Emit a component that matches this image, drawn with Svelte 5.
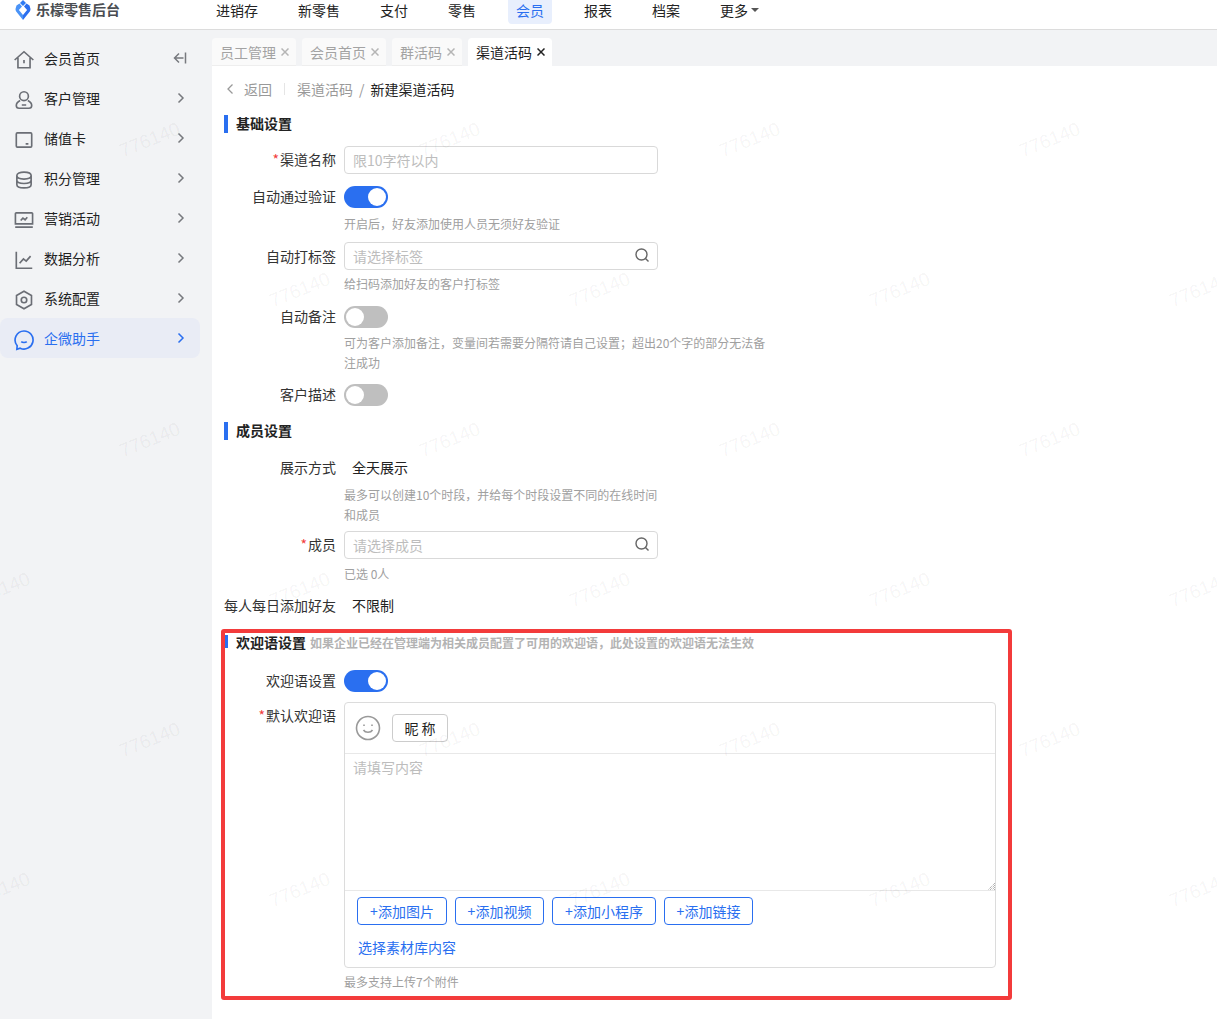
<script>
  const NAV = ["进销存", "新零售", "支付", "零售", "会员", "报表", "档案", "更多"];
  const TABS = ["员工管理", "会员首页", "群活码", "渠道活码"];
  const MENU = [
    { name: "会员首页", icon: "home" },
    { name: "客户管理", icon: "user" },
    { name: "储值卡", icon: "card" },
    { name: "积分管理", icon: "db" },
    { name: "营销活动", icon: "screen" },
    { name: "数据分析", icon: "chart" },
    { name: "系统配置", icon: "gear" },
    { name: "企微助手", icon: "chat" }
  ];
  const ICONS = {
    home: "M1.500 10 10 2.500l8.500 7.500M4.500 8v9h11V8M10 10v3",
    user: "M10 2.500a4 4 0 1 1 0 8 4 4 0 0 1 0-8ZM6.500 10.500C4.500 11.500 3 13 3 15c0 1.500 1 2.500 2.500 2.500h9c1.500 0 2.500-1 2.500-2.500 0-2-1.500-3.500-3.500-4.500M8 14.500h4",
    card: "M4 3.500h12a1 1 0 0 1 1 1v11a1 1 0 0 1-1 1H4a1 1 0 0 1-1-1v-11a1 1 0 0 1 1-1ZM11.500 13.500h2.500",
    db: "M3.500 6c0-1.900 2.900-3.200 6.500-3.200s6.500 1.300 6.500 3.200-2.900 3.200-6.500 3.200S3.500 7.900 3.500 6ZM3.500 6v8c0 1.900 2.900 3.200 6.500 3.200s6.500-1.300 6.500-3.200V6M3.500 10c0 1.900 2.900 3.200 6.500 3.200s6.500-1.300 6.500-3.200",
    screen: "M3 3.500h14a.8.8 0 0 1 .8.8v9.200H2.200V4.300a.8.8 0 0 1 .8-.8ZM2 16.500h16M7 10.500l2-2.200 2 1.500 2-2.300",
    chart: "M3 2.500v15h14.500M6 13l3.500-4 2.500 2 4-4.500",
    gear: "M10 2l6.800 3.900v8.200L10 18l-6.800-3.900V5.900ZM10 7.500a2.500 2.500 0 1 1 0 5 2.500 2.500 0 0 1 0-5Z",
    chat: "M10 1.800a8.200 8.200 0 1 1-3.500 15.600L3.500 18.500l.3-3.300A8.200 8.200 0 0 1 10 1.800ZM7.500 11.500c1 1 4 1 5 0"
  };
  const ROWS = [
    { y: 140, xs: [150, 450, 750, 1050] },
    { y: 290, xs: [300, 600, 900, 1200] },
    { y: 440, xs: [150, 450, 750, 1050] },
    { y: 590, xs: [0, 300, 600, 900, 1200] },
    { y: 740, xs: [150, 450, 750, 1050] },
    { y: 890, xs: [0, 300, 600, 900, 1200] }
  ];
  const MARKS = ROWS.flatMap(r => r.xs.map(x => ({ x, y: r.y })));
</script>

<div class="page">
  <header class="top">
    <div class="logo">
      <svg width="16" height="20" viewBox="0 0 16 20">
        <path d="M8 0 11 3 8 6 5 3Z" fill="#2f7bf3" />
        <path d="M4.500 3.500 7 6.500 3.900 10 8 15v5L1.200 11.500Q.2 10 .6 8.500L1.500 5.500Z" fill="#4a93f7" />
        <path d="M11.500 3.500 9 6.500 12.100 10 8 15v5l6.800-8.500q1-1.500.6-3L14.500 5.500Z" fill="#2b6ff0" />
      </svg>
      <span>乐檬零售后台</span>
    </div>
    <nav>
      {#each NAV as item}
        <span class="nav-item" class:active={item === "会员"}>
          {item}{#if item === "更多"}<i class="caret"></i>{/if}
        </span>
      {/each}
    </nav>
  </header>

  <div class="body">
    <aside>
      {#each MENU as m, i}
        <div class="menu-item" class:active={m.name === "企微助手"}>
          <svg class="menu-icon" width="22" height="22" viewBox="0 0 20 20" fill="none" stroke="currentColor" stroke-width="1.500">
            <path d={ICONS[m.icon]} />
          </svg>
          <span class="menu-name">{m.name}</span>
          {#if i === 0}
            <svg class="arrow" width="16" height="14" viewBox="0 0 16 14" fill="none" stroke="#77797e" stroke-width="1.500">
              <path d="M6 2.500 1.500 7 6 11.500M1.500 7h9M12.500 1.500v11" />
            </svg>
          {:else}
            <svg class="arrow" width="16" height="14" viewBox="0 0 16 14" fill="none" stroke="currentColor" stroke-width="1.500">
              <path d="M5.500 2.500 10 7l-4.500 4.500" />
            </svg>
          {/if}
        </div>
      {/each}
    </aside>

    <main>
      <div class="tabs">
        {#each TABS as tab}
          <div class="tab" class:current={tab === "渠道活码"}>
            {tab}
            <svg class="close" width="8" height="8" viewBox="0 0 8 8" fill="none" stroke="currentColor" stroke-width="1.500"><path d="m.5.5 7 7M7.500.5l-7 7" /></svg>
          </div>
        {/each}
      </div>

      <div class="content">
        <div class="crumbs">
          <svg width="8" height="12" viewBox="0 0 8 12" fill="none" stroke="#999" stroke-width="1.300"><path d="M6.500 1.500 2 6l4.500 4.500" /></svg>
          <span class="back">返回</span>
          <i class="sep"></i>
          <span class="crumb">渠道活码</span>
          <span class="slash">/</span>
          <span class="here">新建渠道活码</span>
        </div>

        <h3 class="title first">基础设置</h3>

        <div class="row r-name">
          <label><em>*</em>渠道名称</label>
          <div class="input">限10字符以内</div>
        </div>
        <div class="row r-switch">
          <label>自动通过验证</label>
          <span class="switch on"></span>
        </div>
        <p class="hint">开启后，好友添加使用人员无须好友验证</p>
        <div class="row r-input">
          <label>自动打标签</label>
          <div class="input">请选择标签{@render search()}</div>
        </div>
        <p class="hint h-tight">给扫码添加好友的客户打标签</p>
        <div class="row r-switch2">
          <label>自动备注</label>
          <span class="switch"></span>
        </div>
        <p class="hint wide">可为客户添加备注，变量间若需要分隔符请自己设置；超出20个字的部分无法备注成功</p>
        <div class="row r-desc">
          <label>客户描述</label>
          <span class="switch"></span>
        </div>

        <h3 class="title t-member">成员设置</h3>

        <div class="row r-show">
          <label>展示方式</label>
          <span class="value">全天展示</span>
        </div>
        <p class="hint narrow">最多可以创建10个时段，并给每个时段设置不同的在线时间和成员</p>
        <div class="row r-member">
          <label><em>*</em>成员</label>
          <div class="input">请选择成员{@render search()}</div>
        </div>
        <p class="hint h-count">已选 0人</p>
        <div class="row r-limit">
          <label>每人每日添加好友</label>
          <span class="value">不限制</span>
        </div>

        <section class="welcome">
          <h3 class="title t-welcome">欢迎语设置<small>如果企业已经在管理端为相关成员配置了可用的欢迎语，此处设置的欢迎语无法生效</small></h3>
          <div class="row r-wswitch">
            <label>欢迎语设置</label>
            <span class="switch on"></span>
          </div>
          <div class="row r-editor">
            <label class="l-top"><em>*</em>默认欢迎语</label>
            <div class="editor">
              <div class="toolbar">
                <svg width="26" height="26" viewBox="0 0 26 26" fill="none" stroke="#999" stroke-width="1.600">
                  <circle cx="13" cy="13" r="11.500" />
                  <path d="M8.500 15c1.800 3 7.200 3 9 0" />
                  <path d="M9 9.500v1.500M17 9.500v1.500" />
                </svg>
                <span class="nick">昵 称</span>
              </div>
              <div class="area">
                请填写内容
                <svg class="grip" width="8" height="8" viewBox="0 0 8 8" fill="none" stroke="#8f8f8f" stroke-dasharray="1 1"><path d="M8 1 1 8M8 3 3 8M8 5 5 8M8 7 7 8" /></svg>
              </div>
              <div class="actions">
                <span class="add">+添加图片</span>
                <span class="add">+添加视频</span>
                <span class="add">+添加小程序</span>
                <span class="add">+添加链接</span>
              </div>
              <div class="pick">选择素材库内容</div>
            </div>
          </div>
          <p class="hint h-last">最多支持上传7个附件</p>
        </section>
      </div>
    </main>
  </div>

  <div class="marks">
    {#each MARKS as m}
      <span style="left:{m.x}px;top:{m.y}px">776140</span>
    {/each}
  </div>
</div>

{#snippet search()}
  <svg class="search" width="16" height="16" viewBox="0 0 16 16" fill="none" stroke="#666" stroke-width="1.400">
    <circle cx="7.500" cy="7.500" r="5.500" />
    <path d="m11.500 11.500 3 3" />
  </svg>
{/snippet}

<style>
  :global(body) {
    margin: 0;
    font-family: "Noto Sans CJK SC", "Noto Sans", sans-serif;
    font-size: 14px;
    color: #222;
  }
  .page {
    position: relative;
    height: 1019px;
    overflow: hidden;
    background: #fff;
  }
  .top {
    display: flex;
    height: 29px;
    border-bottom: 1px solid #dcdcdc;
    background: #fff;
  }
  .logo {
    display: flex;
    align-items: center;
    gap: 5px;
    width: 201px;
    height: 20px;
    padding-left: 15px;
    font-weight: 700;
    color: #4a4d52;
  }
  .logo span {
    margin-bottom: 2px;
  }
  nav {
    display: flex;
    gap: 40px;
    height: 24px;
  }
  .nav-item {
    display: flex;
    align-items: center;
    box-sizing: border-box;
    padding-bottom: 4px;
    color: #222;
  }
  .nav-item.active {
    margin: 0 -8px;
    padding: 0 8px 4px;
    border-radius: 0 0 4px 4px;
    background: #e8effd;
    color: #2a6ff0;
  }
  .caret {
    margin-left: 3px;
    border: 4px solid transparent;
    border-top: 4px solid #555;
    border-bottom: 0;
  }
  .body {
    display: flex;
    height: 989px;
  }
  aside {
    flex: none;
    box-sizing: border-box;
    width: 212px;
    padding: 8px 12px 0 0;
    background: #f2f3f5;
  }
  .menu-item {
    display: flex;
    align-items: center;
    height: 40px;
    border-radius: 8px;
    color: #222;
  }
  .menu-item.active {
    background: #e9ecf5;
    color: #2a6ff0;
  }
  .menu-icon {
    flex: none;
    margin: 4px 0 0 13px;
    color: #6b6e75;
  }
  .active .menu-icon {
    color: #2a6ff0;
  }
  .menu-name {
    flex: 1;
    margin-left: 9px;
  }
  .arrow {
    margin-right: 11px;
    color: #77797e;
  }
  .active .arrow {
    color: #2a6ff0;
  }
  main {
    flex: 1;
    min-width: 0;
  }
  .tabs {
    display: flex;
    gap: 6px;
    height: 28px;
    padding-top: 8px;
    background: #f2f3f5;
  }
  .tab {
    display: flex;
    align-items: center;
    gap: 5px;
    padding: 0 7px 0 8px;
    border-radius: 4px 4px 0 0;
    border-bottom: 1px solid #eee;
    background: #fafafa;
    color: #a3a3a3;
  }
  .tab.current {
    border-bottom: 0;
    background: #fff;
    color: #222;
  }
  .close {
    color: #b5b5b5;
  }
  .current .close {
    color: #222;
  }
  .content {
    padding: 0 0 0 12px;
  }
  .crumbs {
    display: flex;
    align-items: center;
    height: 20px;
    padding-top: 13px;
    color: #999;
  }
  .crumbs svg {
    margin-left: 2px;
  }
  .back {
    margin-left: 10px;
  }
  .sep {
    width: 1px;
    height: 12px;
    margin: 0 12px;
    background: #e5e5e5;
  }
  .slash {
    margin: 0 6px;
  }
  .here {
    color: #222;
  }
  .title {
    position: relative;
    height: 18px;
    margin: 0;
    padding-left: 12px;
    font-size: 14px;
    line-height: 16px;
    font-weight: 700;
    color: #222;
  }
  .title::before {
    content: "";
    position: absolute;
    left: 0;
    top: 0;
    width: 4px;
    height: 18px;
    background: #2a6ff0;
  }
  .title small {
    margin-left: 4px;
    font-size: 12px;
    font-weight: 700;
    color: #b3b3b3;
  }
  .first {
    margin-top: 16px;
  }
  .t-member {
    margin-top: 16px;
  }
  .row {
    display: flex;
    align-items: center;
    gap: 8px;
  }
  label {
    flex: none;
    width: 112px;
    margin-bottom: 2px;
    text-align: right;
    line-height: 18px;
    color: #333;
  }
  .r-input label {
    margin-bottom: 0;
  }
  em {
    margin-right: 1px;
    font-style: normal;
    color: #f23c3c;
  }
  .input {
    position: relative;
    box-sizing: border-box;
    width: 314px;
    height: 28px;
    padding-left: 8px;
    border: 1px solid #d9d9d9;
    border-radius: 4px;
    line-height: 26px;
    color: #bdbdbd;
  }
  .search {
    position: absolute;
    right: 7px;
    top: 4px;
  }
  .switch {
    position: relative;
    width: 44px;
    height: 22px;
    border-radius: 11px;
    background: #bfbfbf;
  }
  .switch::after {
    content: "";
    position: absolute;
    left: 2px;
    top: 2px;
    width: 18px;
    height: 18px;
    border-radius: 50%;
    background: #fff;
  }
  .switch.on {
    background: #2a6ff0;
  }
  .switch.on::after {
    left: 24px;
  }
  .value {
    margin: 0 0 2px 8px;
    line-height: 18px;
    color: #222;
  }
  .hint {
    margin: 6px 0 0 120px;
    font-size: 12px;
    line-height: 20px;
    color: #a0a0a0;
  }
  .h-tight {
    margin-top: 4px;
  }
  .h-count {
    margin-top: 5px;
  }
  .wide {
    width: 424px;
    margin-top: 5px;
  }
  .narrow {
    width: 316px;
    margin-top: 7px;
  }
  .r-name {
    margin-top: 13px;
  }
  .r-switch {
    margin-top: 12px;
  }
  .r-input {
    margin-top: 8px;
  }
  .r-switch2 {
    margin-top: 12px;
  }
  .r-desc {
    margin-top: 11px;
  }
  .r-show {
    margin-top: 18px;
    height: 20px;
  }
  .r-member {
    margin-top: 6px;
  }
  .r-limit {
    margin-top: 12px;
    height: 20px;
  }
  .welcome {
    box-sizing: border-box;
    width: 791px;
    height: 371px;
    margin: 13px 0 0 -3px;
    border: 4px solid #f33b3b;
    border-radius: 3px;
  }
  .t-welcome {
    margin: 1px 0 0;
    padding-left: 11px;
  }
  .t-welcome::before {
    top: 1px;
    width: 3px;
    height: 13px;
  }
  .r-wswitch {
    margin-top: 18px;
  }
  .welcome label {
    width: 111px;
  }
  .r-editor {
    align-items: flex-start;
    margin-top: 10px;
  }
  .l-top {
    padding-top: 4px;
  }
  .editor {
    box-sizing: border-box;
    width: 652px;
    height: 266px;
    border: 1px solid #dcdcdc;
    border-radius: 4px;
  }
  .toolbar {
    display: flex;
    align-items: center;
    gap: 11px;
    box-sizing: border-box;
    height: 51px;
    padding: 0 0 0 10px;
    border-bottom: 1px solid #e8e8e8;
  }
  .nick {
    box-sizing: border-box;
    width: 56px;
    height: 28px;
    border: 1px solid #ccc;
    border-radius: 4px;
    line-height: 26px;
    text-align: center;
    color: #222;
  }
  .area {
    position: relative;
    box-sizing: border-box;
    height: 137px;
    padding: 3px 8px;
    border-bottom: 1px solid #e8e8e8;
    line-height: 20px;
    color: #bdbdbd;
  }
  .grip {
    position: absolute;
    right: 0;
    bottom: 0;
  }
  .actions {
    display: grid;
    grid-template-columns: 90px 89px 104px 89px;
    gap: 8px;
    padding: 6px 0 0 12px;
  }
  .add {
    box-sizing: border-box;
    height: 28px;
    border: 1px solid #2a6ff0;
    border-radius: 4px;
    line-height: 26px;
    text-align: center;
    color: #2a6ff0;
  }
  .pick {
    margin: 12px 0 0 13px;
    line-height: 20px;
    color: #2a6ff0;
  }
  .h-last {
    margin: 4px 0 0 119px;
  }
  .marks {
    position: absolute;
    inset: 0;
    pointer-events: none;
  }
  .marks span {
    position: absolute;
    transform: translate(-50%, -50%) rotate(-22deg);
    font-family: "Liberation Sans", sans-serif;
    font-size: 19px;
    color: rgba(0, 0, 0, 0.05);
  }
</style>
